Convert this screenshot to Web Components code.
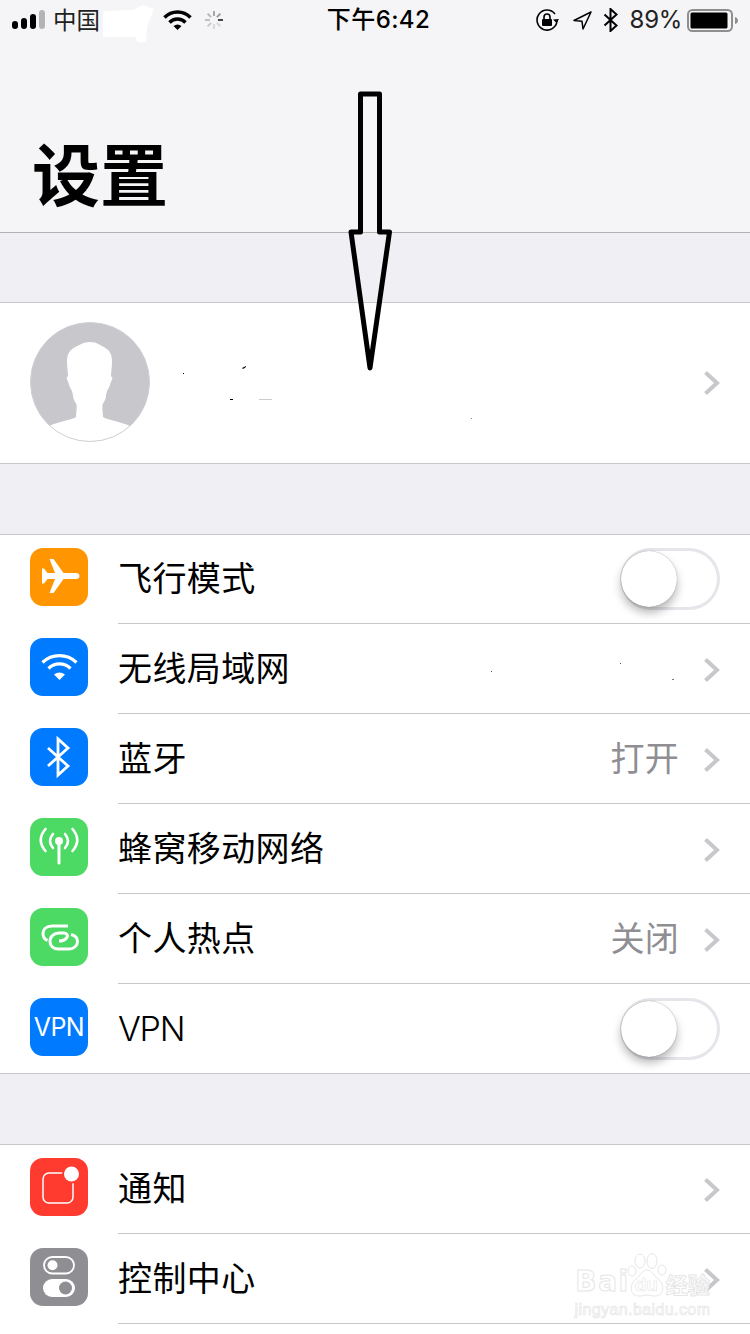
<!DOCTYPE html>
<html lang="zh">
<head>
<meta charset="utf-8">
<title>设置</title>
<style>
  html, body { margin: 0; padding: 0; }
  body {
    width: 750px;
    height: 1334px;
    overflow: hidden;
    position: relative;
    background: #efeff4;
    font-family: "Noto Sans CJK SC", "Noto Sans", sans-serif;
  }
</style>
</head>
<body>
<status-bar></status-bar>
<large-title>设置</large-title>
<settings-group gap="69" bare>
  <profile-row></profile-row>
</settings-group>
<settings-group gap="70">
  <settings-row icon="plane">飞行模式<app-switch slot="accessory"></app-switch></settings-row>
  <settings-row icon="wifi" chevron>无线局域网</settings-row>
  <settings-row icon="bluetooth" chevron value="打开">蓝牙</settings-row>
  <settings-row icon="cell" chevron>蜂窝移动网络</settings-row>
  <settings-row icon="hotspot" chevron value="关闭">个人热点</settings-row>
  <settings-row icon="vpn" latin last>VPN<app-switch slot="accessory"></app-switch></settings-row>
</settings-group>
<settings-group gap="70" open-end>
  <settings-row icon="notify" chevron>通知</settings-row>
  <settings-row icon="control" chevron>控制中心</settings-row>
</settings-group>
<photo-marks></photo-marks>
<baidu-mark></baidu-mark>

<script>
// icons, all on a 58 box
const TILE_ICONS = {
  plane: {
    bg: "#ff9500",
    svg: `<path fill="#fff" d="M46 25H33.500L23.500 11h-4L25 25h-7.500L14 20.500h-2v15h2l3.500-4.500H25l-5.500 14h4l10-14H46c2 0 3.500-1 3.500-3S48 25 46 25z"/>`,
  },
  wifi: {
    bg: "#007aff",
    svg: `<g fill="none" stroke="#fff" stroke-width="3.200">
        <path d="M12.500 24.500a24.500 24.500 0 0 1 34 0"/>
        <path d="M18.500 30.500a15.600 15.600 0 0 1 22 0"/>
      </g>
      <path fill="#fff" d="M24 36.500q5.500-4 11 0l-5.500 5.500z"/>`,
  },
  bluetooth: {
    bg: "#007aff",
    svg: `<path fill="none" stroke="#fff" stroke-width="2.800" d="M18 20l20 18-10 9V11l10 9-20 18"/>`,
  },
  cell: {
    bg: "#4cd964",
    svg: `<g fill="none" stroke="#fff" stroke-width="2.600" stroke-linecap="round">
        <path d="M15.500 11q-9.500 11 0 22"/><path d="M23 16q-6 7 0 14"/>
        <path d="M42.500 11q9.500 11 0 22"/><path d="M35 16q6 7 0 14"/>
        <path stroke-width="3" d="M29 24v21"/>
      </g>
      <circle cx="29" cy="23" r="4" fill="#fff"/>`,
  },
  hotspot: {
    bg: "#4cd964",
    svg: `<g fill="none" stroke="#fff" stroke-width="3">
        <path d="M38 18H22c-6 0-9 3.500-9 7.500 0 3.500 2 6 4.500 7"/>
        <path d="M41 26.500c4 1 6.500 3.500 6.500 7 0 4-3.500 7.500-8.500 7.500H28c-5 0-8-3.500-8-7.500 0-5 4-8.500 9-8.500h5c3 0 4.500 3 2.500 5-1.500 2-4.500 3-7.500 3"/>
      </g>`,
  },
  notify: {
    bg: "#ff3b30",
    svg: `<rect x="13" y="15" width="30" height="30" rx="6" fill="none" stroke="#fff" stroke-width="1.500"/>
      <circle cx="41.500" cy="16" r="9.500" fill="#ff3b30"/>
      <circle cx="41.500" cy="16" r="7.500" fill="#fff"/>`,
  },
  control: {
    bg: "#8e8e93",
    svg: `<rect x="14" y="9" width="30" height="16.500" rx="8.250" fill="none" stroke="#fff" stroke-width="1.800"/>
      <circle cx="22.500" cy="17.300" r="5" fill="#fff"/>
      <rect x="13" y="31" width="32" height="18" rx="9" fill="#fff"/>
      <circle cx="35.500" cy="40" r="6.500" fill="#8e8e93"/>`,
  },
};

class AppTile extends HTMLElement {
  constructor() {
    super();
    this.attachShadow({ mode: "open" });
  }

  connectedCallback() {
    const name = this.getAttribute("name");
    const icon = TILE_ICONS[name] || { bg: "#007aff", svg: "" };
    const inner = name === "vpn"
      ? `<span class="txt">VPN</span>`
      : `<svg width="58" height="58" viewBox="0 0 58 58">${icon.svg}</svg>`;
    this.shadowRoot.innerHTML = `
      <style>
        :host {
          display: flex;
          align-items: center;
          justify-content: center;
          width: 58px;
          height: 58px;
          flex: none;
          border-radius: 13px;
          background: ${icon.bg};
        }
        svg { display: block; }
        .txt {
          color: #fff;
          font: 400 25px/1 Inter, "Liberation Sans", sans-serif;
          letter-spacing: -0.6px;
        }
      </style>
      ${inner}
    `;
  }
}

class AppChevron extends HTMLElement {
  constructor() {
    super();
    this.attachShadow({ mode: "open" });
    this.shadowRoot.innerHTML = `
      <style>
        :host { display: block; width: 16px; height: 24px; flex: none; }
        svg { display: block; }
      </style>
      <svg width="16" height="24" viewBox="0 0 16 24">
        <path d="M1.500 1.500L13 12 1.500 22.500" fill="none" stroke="#c7c7cc" stroke-width="4"/>
      </svg>
    `;
  }
}

class AppSwitch extends HTMLElement {
  constructor() {
    super();
    this.attachShadow({ mode: "open" });
    this.shadowRoot.innerHTML = `
      <style>
        :host {
          display: flex;
          align-items: center;
          box-sizing: border-box;
          width: 100px;
          height: 62px;
          padding: 0 1px;
          border-radius: 31px;
          box-shadow: inset 0 0 0 3px #e5e5ea;
        }
        .knob {
          width: 56px;
          height: 56px;
          border-radius: 50%;
          background: #fff;
          box-shadow: 0 0 1px rgba(0, 0, 0, .45), 0 6px 10px rgba(0, 0, 0, .28);
        }
      </style>
      <div class="knob"></div>
    `;
  }
}

class StatusBar extends HTMLElement {
  constructor() {
    super();
    this.attachShadow({ mode: "open" });
    this.shadowRoot.innerHTML = `
      <style>
        :host {
          display: grid;
          grid-template-columns: 1fr auto 1fr;
          align-items: center;
          box-sizing: border-box;
          height: 40px;
          padding: 0 12px;
          color: #000;
          background: #f5f5f7;
          font: 400 24px/40px Inter, "Noto Sans CJK SC", sans-serif;
        }
        svg { display: block; flex: none; }
        .side { display: flex; align-items: center; }
        .right { justify-content: flex-end; }
        .carrier { margin: -2px 0 0 8px; width: 110px; color: #222; font-family: "Noto Sans CJK SC", sans-serif; font-size: 23.500px; }
        .spin { margin-left: 12px; }
        .time { margin-left: 7px; font-weight: 500; letter-spacing: .4px; }
        .pct { margin: 0 5px 0 12px; color: #222; letter-spacing: -.3px; }
        .loc { margin: 0 11px 0 14px; }
      </style>
      <div class="side">
        <svg width="33" height="20" viewBox="0 0 33 20">
          <rect x="0" y="11" width="6" height="8" rx="3"/>
          <rect x="9" y="8" width="6" height="11" rx="3"/>
          <rect x="18" y="4" width="6" height="15" rx="3"/>
          <rect x="27" y="0" width="6" height="19" rx="3" fill="#b4b4b6"/>
        </svg>
        <span class="carrier">中国</span>
        <svg width="29" height="20" viewBox="0 0 29 20">
          <g fill="none" stroke="#000" stroke-width="3.400">
            <path d="M1.500 7.500a18 18 0 0 1 26 0"/>
            <path d="M6.500 12.500a11 11 0 0 1 16 0"/>
          </g>
          <path d="M10.500 16q4-3 8 0l-4 4z"/>
        </svg>
        <svg class="spin" width="20" height="20" viewBox="0 0 20 20" stroke-width="2" stroke-linecap="butt">
          <path d="M10 1v5" stroke="#a8a8a8"/><path d="M16.400 3.600l-3.500 3.500" stroke="#9a9a9a"/>
          <path d="M19 10h-5" stroke="#444"/><path d="M16.400 16.400l-3.500-3.500" stroke="#d8d8d8"/>
          <path d="M10 19v-5" stroke="#d8d8d8"/><path d="M3.600 16.400l3.500-3.500" stroke="#c8c8c8"/>
          <path d="M1 10h5" stroke="#c0c0c0"/><path d="M3.600 3.600l3.500 3.500" stroke="#b8b8b8"/>
        </svg>
      </div>
      <div class="time">下午6:42</div>
      <div class="side right">
        <svg width="23" height="22" viewBox="0 0 23 22">
          <path d="M19 5A10 10 0 1 0 21 12" fill="none" stroke="#000" stroke-width="1.600"/>
          <path d="M17 10.500l3.500 3.500 2.500-4z"/>
          <rect x="6" y="10" width="10" height="7" rx="1"/>
          <path d="M8 10.500V8a3 3 0 0 1 6 0v2.500" fill="none" stroke="#000" stroke-width="1.600"/>
        </svg>
        <svg class="loc" width="19" height="19" viewBox="0 0 19 19">
          <path d="M18 1L1 9.500l8 .8 1 7.700z" fill="none" stroke="#000" stroke-width="1.500" stroke-linejoin="round"/>
        </svg>
        <svg width="15" height="24" viewBox="0 0 15 24">
          <path d="M1.500 6.500l12 11-6 5.500V1l6 5.500-12 11" fill="none" stroke="#000" stroke-width="2"/>
        </svg>
        <span class="pct">89%</span>
        <svg width="51" height="23" viewBox="0 0 51 23">
          <rect x="1" y="1" width="44" height="21" rx="4.500" fill="none" stroke="#8e8e8e" stroke-width="2"/>
          <rect x="3.500" y="3.500" width="37" height="16" rx="1.500"/>
          <path d="M48 8c2 .5 3 2 3 3.500S50 14.500 48 15z" fill="#8e8e8e"/>
        </svg>
      </div>
    `;
  }
}

class LargeTitle extends HTMLElement {
  constructor() {
    super();
    this.attachShadow({ mode: "open" });
    this.shadowRoot.innerHTML = `
      <style>
        :host {
          display: block;
          box-sizing: border-box;
          height: 193px;
          padding: 88px 0 0 32px;
          background: #f5f5f7;
          border-bottom: 1px solid #b2b2b2;
          color: #000;
          font: 700 68px/88px "Noto Sans CJK SC", sans-serif;
        }
      </style>
      <slot></slot>
    `;
  }
}

class SettingsGroup extends HTMLElement {
  constructor() {
    super();
    this.attachShadow({ mode: "open" });
  }

  connectedCallback() {
    const gap = this.getAttribute("gap") || 70;
    this.shadowRoot.innerHTML = `
      <style>
        :host {
          display: block;
          margin-top: ${gap}px;
          background: #fff;
          border-top: 1px solid #c8c7cc;
          border-bottom: 1px solid #c8c7cc;
        }
        :host([open-end]) { border-bottom: 0; padding-bottom: 11px; }
        ::slotted(settings-row:first-child) { margin-top: -1px; }
      </style>
      <slot></slot>
    `;
  }
}

class SettingsRow extends HTMLElement {
  constructor() {
    super();
    this.attachShadow({ mode: "open" });
  }

  connectedCallback() {
    const value = this.getAttribute("value");
    this.shadowRoot.innerHTML = `
      <style>
        :host {
          display: flex;
          align-items: flex-start;
          box-sizing: border-box;
          height: 90px;
          padding-left: 30px;
          color: #000;
          font: 400 34px/1 Inter, "Noto Sans CJK SC", sans-serif;
        }
        :host([last]) { height: 89px; }
        app-tile { margin-top: 14px; }
        .body {
          flex: 1;
          display: flex;
          align-items: center;
          box-sizing: border-box;
          height: 100%;
          margin-left: 30px;
          padding-right: 30px;
          border-bottom: 1px solid #c8c7cc;
        }
        :host([last]) .body { border-bottom: 0; }
        .label { flex: 1; letter-spacing: .4px; }
        :host([latin]) .label { letter-spacing: -1.300px; font-weight: 300; }
        .value { margin-right: 25px; color: #8e8e93; letter-spacing: .3px; }
        ::slotted(app-switch) { margin-top: 1px; }
        app-chevron { margin-top: 3px; }
      </style>
      <app-tile name="${this.getAttribute("icon")}"></app-tile>
      <div class="body">
        <div class="label"><slot></slot></div>
        ${value ? `<span class="value">${value}</span>` : ""}
        <slot name="accessory"></slot>
        ${this.hasAttribute("chevron") ? "<app-chevron></app-chevron>" : ""}
      </div>
    `;
  }
}

class ProfileRow extends HTMLElement {
  constructor() {
    super();
    this.attachShadow({ mode: "open" });
    this.shadowRoot.innerHTML = `
      <style>
        :host {
          display: flex;
          align-items: center;
          justify-content: space-between;
          height: 160px;
          padding: 0 30px;
        }
        svg { display: block; }
        .avatar { margin-bottom: 2px; }
      </style>
      <svg class="avatar" width="120" height="120" viewBox="0 0 120 120">
        <circle cx="60" cy="60" r="59.500" fill="#c7c7cc"/>
        <path fill="#fff" d="M60 20c-7 0-12 3.500-17 6.500-5 3-6 8-6 13.500 0 5 1 10 1 14l-1.500 2c.5 2 2 4 2.500 7 1 3 2.500 5 3 6 1 3 1 7 2 9l2.500 4.500c.5 5-.5 9-.5 12.500-4 3-16 4-27 9a60 60 0 0 0 81 0c-11-5-23-6-27-9 0-3.500-1-7.500-.5-12.500L75 78c1-2 1-6 2-9 .5-1 2-3 3-6 .5-3 2-5 2.500-7L81 54c0-4 1-9 1-14 0-5.500-1-10.500-6-13.500C71 23.500 67 20 60 20z"/>
        <circle cx="60" cy="60" r="59.500" fill="none" stroke="#d0d0d4" stroke-width="1"/>
      </svg>
      <app-chevron></app-chevron>
    `;
  }
}

// things drawn on top of the photo: the black arrow, the white smudge, stray pixels
class PhotoMarks extends HTMLElement {
  constructor() {
    super();
    this.attachShadow({ mode: "open" });
    this.shadowRoot.innerHTML = `
      <style>
        :host { position: absolute; left: 0; top: 0; width: 750px; height: 1334px; pointer-events: none; }
        svg { display: block; }
      </style>
      <svg width="750" height="1334" viewBox="0 0 750 1334">
        <path fill="#fff" d="M103 11l30-1 10-5 11 4-4 10-3 8-1 15-9 0-1-5-33 0z"/>
        <path fill="none" stroke="#000" stroke-width="5" stroke-linejoin="round"
          d="M360.500 94h19v138h10L370 368 351 232h9.500z"/>
        <g fill="#000">
          <rect x="183" y="373" width="1" height="1"/>
          <path d="M242 368l4-2v1l-3 2z"/>
          <rect x="230" y="399" width="3" height="1"/>
          <rect x="259" y="399" width="13" height="1" fill="#ccc"/>
          <rect x="471" y="418" width="1" height="1" fill="#888"/>
          <rect x="491" y="671" width="1" height="1" fill="#555"/>
          <rect x="620" y="663" width="1" height="1" fill="#555"/>
          <rect x="672" y="679" width="2" height="1" fill="#777"/>
        </g>
      </svg>
    `;
  }
}

class BaiduMark extends HTMLElement {
  constructor() {
    super();
    this.attachShadow({ mode: "open" });
    this.shadowRoot.innerHTML = `
      <style>
        :host {
          position: absolute;
          left: 574px;
          top: 1252px;
          width: 137px;
          display: flex;
          flex-direction: column;
          align-items: center;
          color: #fff;
          pointer-events: none;
          -webkit-text-stroke: 1px #e6e6e6;
          font-family: "Liberation Sans", "Noto Sans CJK SC", sans-serif;
        }
        .top { display: flex; align-items: flex-end; height: 46px; }
        .bai { font: 700 28px/32px "DejaVu Sans", sans-serif; letter-spacing: 1.500px; }
        .paw { position: relative; width: 40px; height: 46px; margin: 0 -1px 0 -3px; }
        .paw svg { position: absolute; left: 0; top: 0; }
        .paw span { position: absolute; left: 8px; top: 23px; font: 700 19px/20px "Liberation Sans", sans-serif; -webkit-text-stroke: .6px #e6e6e6; }
        .jy { font: 700 22px/30px "Noto Sans CJK SC", sans-serif; }
        .url { margin-top: 2px; font: 400 16px/20px "Liberation Sans", sans-serif; -webkit-text-stroke: .7px #e6e6e6; letter-spacing: .4px; white-space: nowrap; }
      </style>
      <div class="top">
        <span class="bai">Bai</span>
        <div class="paw">
          <svg width="40" height="46" viewBox="0 0 40 46" fill="#fff" stroke="#e6e6e6" stroke-width="1">
            <ellipse cx="13" cy="9" rx="5" ry="7"/>
            <ellipse cx="25" cy="9" rx="5" ry="7.500"/>
            <ellipse cx="35" cy="18" rx="4" ry="5"/>
            <ellipse cx="5" cy="19" rx="4" ry="5"/>
            <path d="M20 18c-5 0-7 6-12 10-5 4-6 15 3 16 4 .5 6-1 9-1s5 1.500 9 1c9-1 8-12 3-16-5-4-7-10-12-10z"/>
          </svg>
          <span>du</span>
        </div>
        <span class="jy">经验</span>
      </div>
      <div class="url">jingyan.baidu.com</div>
    `;
  }
}

customElements.define("app-tile", AppTile);
customElements.define("app-chevron", AppChevron);
customElements.define("app-switch", AppSwitch);
customElements.define("status-bar", StatusBar);
customElements.define("large-title", LargeTitle);
customElements.define("settings-group", SettingsGroup);
customElements.define("settings-row", SettingsRow);
customElements.define("profile-row", ProfileRow);
customElements.define("photo-marks", PhotoMarks);
customElements.define("baidu-mark", BaiduMark);
</script>
</body>
</html>
